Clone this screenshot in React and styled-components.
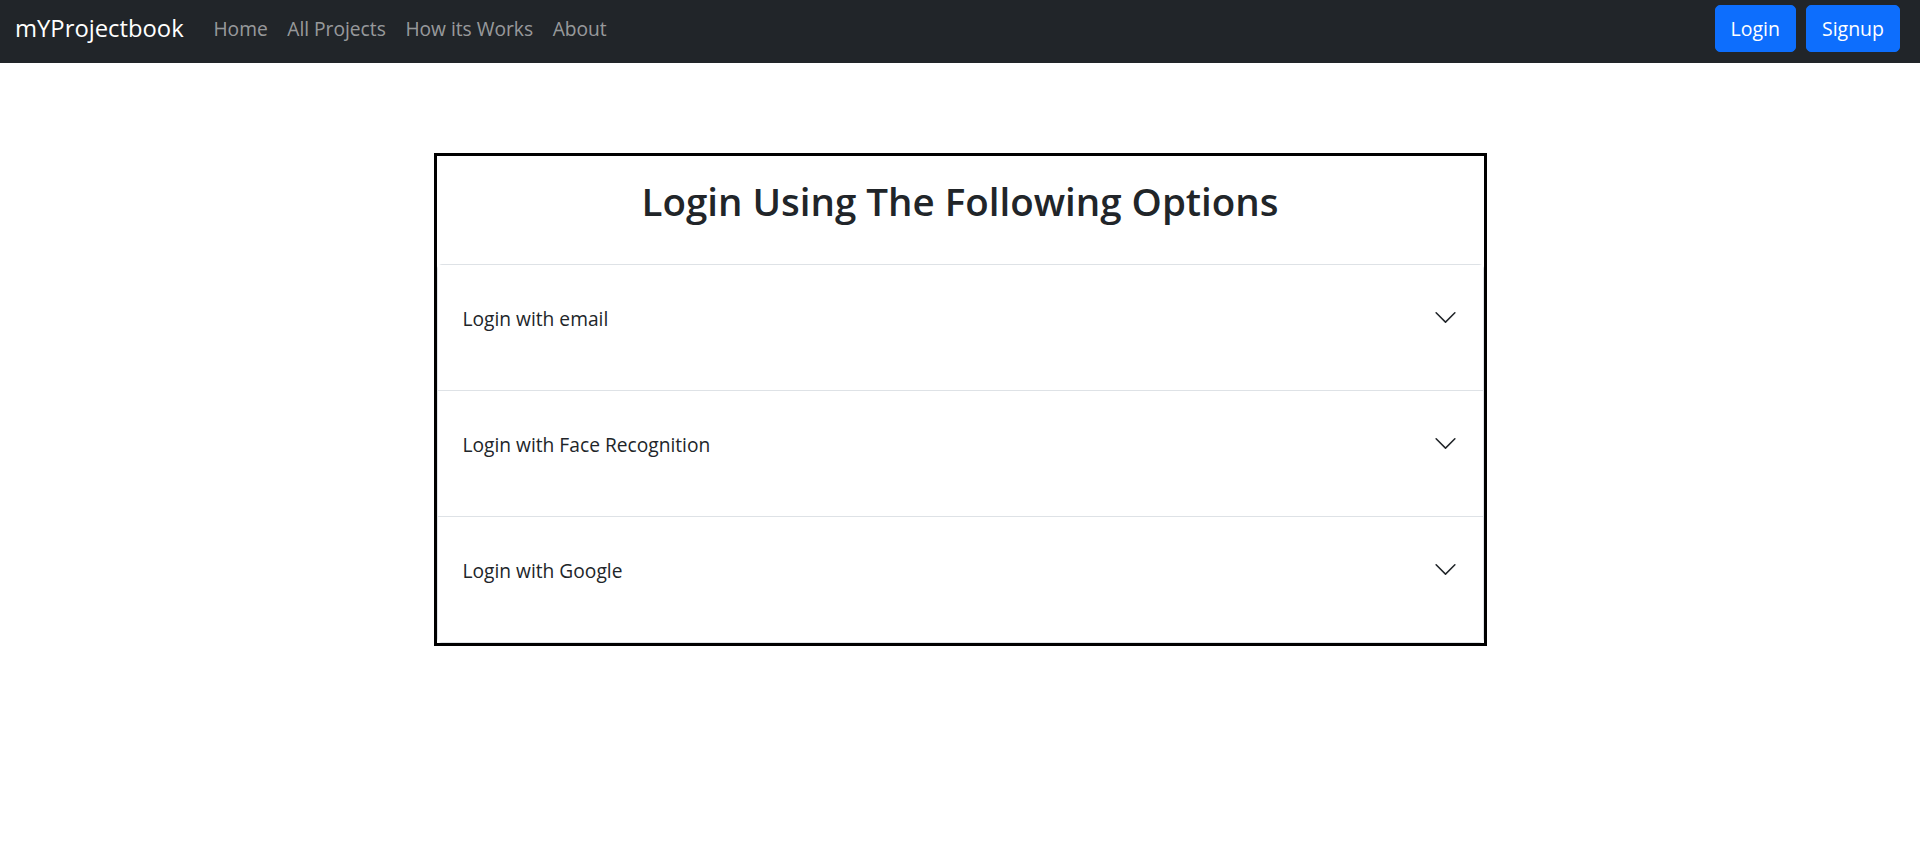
import React from 'react';
import styled, { createGlobalStyle } from 'styled-components';

const GlobalStyle = createGlobalStyle`
  * {
    box-sizing: border-box;
  }

  body {
    margin: 0;
    background: #fff;
    color: #212529;
    font-family: "Open Sans", "Noto Sans", "Liberation Sans", sans-serif;
  }
`;

const options = ['Login with email', 'Login with Face Recognition', 'Login with Google'];
const links = ['Home', 'All Projects', 'How its Works', 'About'];

const ChevronIcon = () => (
  <svg width="25" height="25" viewBox="0 0 16 16" fill="#212529">
    <path
      fillRule="evenodd"
      d="M1.646 4.646a.5.5 0 0 1 .708 0L8 10.293l5.646-5.647a.5.5 0 0 1 .708.708l-6 6a.5.5 0 0 1-.708 0l-6-6a.5.5 0 0 1 0-.708z"
    />
  </svg>
);

const App = () => {
  return (
    <>
      <GlobalStyle />
      <Navbar>
        <Brand href="#">mYProjectbook</Brand>
        <NavList>
          {links.map((link) => (
            <li key={link}>
              <NavLink href="#">{link}</NavLink>
            </li>
          ))}
        </NavList>
        <NavButtons>
          <NavButton>Login</NavButton>
          <NavButton>Signup</NavButton>
        </NavButtons>
      </Navbar>

      <Main>
        <Card>
          <CardTitle>Login Using The Following Options</CardTitle>
          <Accordion>
            {options.map((option) => (
              <AccordionItem key={option}>
                <AccordionButton type="button">
                  <span>{option}</span>
                  <ChevronIcon />
                </AccordionButton>
              </AccordionItem>
            ))}
          </Accordion>
        </Card>
      </Main>
    </>
  );
};

const Navbar = styled.nav`
  display: flex;
  align-items: center;
  height: 63px;
  padding: 5px 20px 11px 15px;
  background: #212529;
`;

const Brand = styled.a`
  margin-right: 20px;
  padding-top: 1px;
  font-size: 23.8px;
  line-height: 1.5;
  color: #fff;
  text-decoration: none;
`;

const NavList = styled.ul`
  display: flex;
  flex: 1;
  margin: 2px 0 0;
  padding: 0;
  list-style: none;
`;

const NavLink = styled.a`
  display: block;
  padding: 10px 9.8px;
  font-size: 19.2px;
  line-height: 1.5;
  color: rgba(255, 255, 255, 0.55);
  text-decoration: none;
`;

const NavButtons = styled.div`
  display: flex;
  gap: 10px;
`;

const NavButton = styled.button`
  height: 47px;
  padding: 0 15px;
  border: 1px solid #0d6efd;
  border-radius: 5px;
  background: #0d6efd;
  color: #fff;
  font-family: inherit;
  font-size: 19.5px;
  cursor: pointer;
`;

const Main = styled.main`
  display: flex;
  justify-content: center;
  padding-top: 90px;
`;

const Card = styled.section`
  width: 1053px;
  border: 3px solid #000;
`;

const CardTitle = styled.h2`
  margin: 0;
  height: 108px;
  padding-top: 22px;
  font-size: 38.5px;
  font-weight: 600;
  line-height: 1.2;
  text-align: center;
  color: #212529;
`;

const Accordion = styled.div`
  border: 1px solid #dee2e6;
  border-radius: 5px;
`;

const AccordionItem = styled.div`
  & + & {
    border-top: 1px solid #dee2e6;
  }
`;

const AccordionButton = styled.button`
  display: flex;
  align-items: flex-start;
  justify-content: space-between;
  width: 100%;
  height: 125px;
  padding: 39px 25px 0 25px;
  border: 0;
  background: #fff;
  color: #212529;
  font-family: inherit;
  font-size: 19.2px;
  line-height: 30px;
  text-align: left;
  cursor: pointer;

  svg {
    flex-shrink: 0;
    margin-top: 1px;
  }
`;

export default App;
